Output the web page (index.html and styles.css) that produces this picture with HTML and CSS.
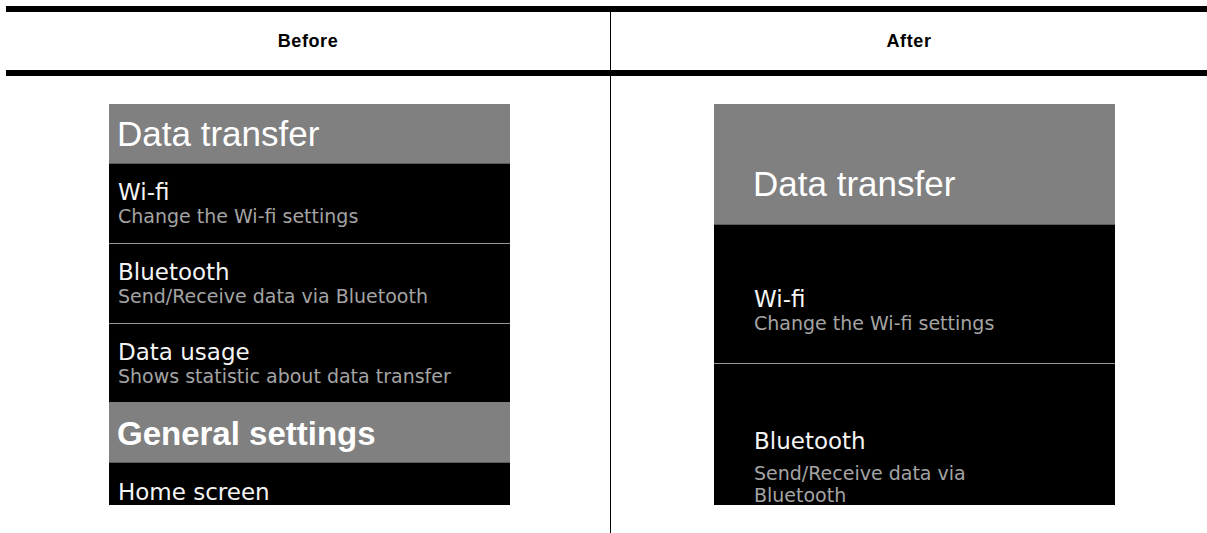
FILE: index.html
```html
<!DOCTYPE html>
<html lang="en">
<head>
    <meta charset="UTF-8">
    <title>Before / After</title>
    <link rel="stylesheet" href="styles.css">
</head>
<body>

    <div class="compare">
        <div class="compare-head">
            <div class="head-cell">Before</div>
            <div class="head-cell">After</div>
        </div>

        <div class="compare-body">
            <div class="body-cell">
                <div class="screen">
                    <div class="group">Data transfer</div>
                    <div class="entry">
                        <div class="entry-title">Wi-fi</div>
                        <div class="entry-text">Change the Wi-fi settings</div>
                    </div>
                    <div class="entry">
                        <div class="entry-title">Bluetooth</div>
                        <div class="entry-text">Send/Receive data via Bluetooth</div>
                    </div>
                    <div class="entry entry-last">
                        <div class="entry-title">Data usage</div>
                        <div class="entry-text">Shows statistic about data transfer</div>
                    </div>
                    <div class="group group-bold">General settings</div>
                    <div class="entry entry-cut">
                        <div class="entry-title">Home screen</div>
                    </div>
                </div>
            </div>

            <div class="body-cell">
                <div class="screen screen-after">
                    <div class="group">Data transfer</div>
                    <div class="entry">
                        <div class="entry-title">Wi-fi</div>
                        <div class="entry-text">Change the Wi-fi settings</div>
                    </div>
                    <div class="entry entry-open">
                        <div class="entry-title">Bluetooth</div>
                        <div class="entry-text">Send/Receive data via Bluetooth</div>
                    </div>
                </div>
            </div>
        </div>
    </div>

</body>
</html>
```

FILE: styles.css
```css
html, body {
    margin: 0;
    overflow: hidden;
    background-color: #ffffff;
}

.compare {
    margin: 6px 0 0 6px;
    border-top: 6px solid #000;
}

.compare-head {
    display: grid;
    grid-template-columns: 604px 1fr;
    height: 58px;
    border-bottom: 6px solid #000;
}

.head-cell {
    display: flex;
    align-items: center;
    justify-content: center;
    font-family: 'Liberation Sans', Arial, sans-serif;
    font-weight: bold;
    font-size: 18px;
    letter-spacing: 0.6px;
    color: #000;
}

.head-cell + .head-cell,
.body-cell + .body-cell {
    border-left: 1px solid #000;
}

.compare-body {
    display: grid;
    grid-template-columns: 604px 1fr;
    height: 460px;
}

.body-cell {
    padding: 28px 0 0 103px;
}

/* list screen */
.screen {
    width: 401px;
    height: 401px;
    overflow: hidden;
    background-color: #000;
}

.group {
    height: 60px;
    box-sizing: border-box;
    padding: 12px 8px 0;
    background-color: #808080;
    border-bottom: 1px solid #5c5c5c;
    font-family: 'Liberation Sans', Arial, sans-serif;
    font-size: 35px;
    line-height: 35px;
    color: #fff;
}

.group-bold {
    font-weight: bold;
    font-size: 33px;
    padding-top: 13px;
}

.entry {
    height: 80px;
    box-sizing: border-box;
    display: flex;
    flex-direction: column;
    justify-content: center;
    padding: 0 9px 1px;
    border-bottom: 1px solid #969696;
}

.entry-last {
    height: 79px;
    border-bottom-color: #808080;
}

.entry-cut {
    justify-content: flex-start;
    padding-top: 16px;
}

.entry-title {
    font-family: 'DejaVu Sans', Verdana, sans-serif;
    font-size: 23px;
    line-height: 26px;
    color: #f4f4f4;
}

.entry-text {
    font-family: 'DejaVu Sans', Verdana, sans-serif;
    font-size: 19px;
    line-height: 22px;
    color: #a4a4a4;
    white-space: nowrap;
}

.screen-after .group {
    height: 121px;
    padding: 62px 39px 0;
}

.screen-after .entry {
    height: 139px;
    justify-content: flex-start;
    padding: 61px 100px 0 40px;
}

.screen-after .entry-open {
    height: 180px;
    padding-top: 64px;
    border-bottom: none;
}

.screen-after .entry-text {
    white-space: normal;
}

.screen-after .entry-open .entry-text {
    margin-top: 8px;
}
```
